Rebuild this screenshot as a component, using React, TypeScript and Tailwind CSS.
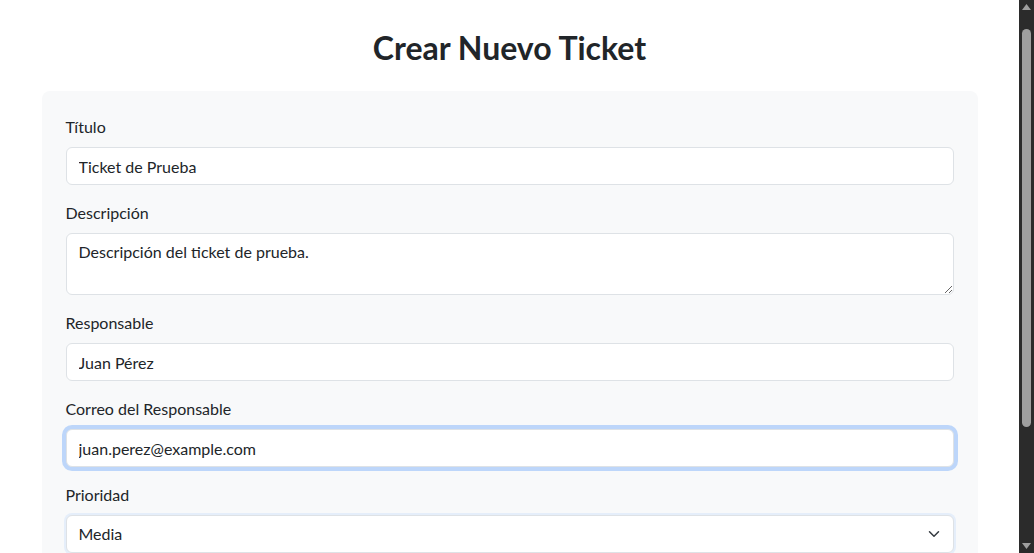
import { useState } from "react";

const inputClass =
  "block w-full rounded-[6px] border border-[#dee2e6] bg-white px-3 py-[6px] text-base leading-6 text-[#212529] outline-none";

function Label({ children, htmlFor }: { children: React.ReactNode; htmlFor: string }) {
  return (
    <label htmlFor={htmlFor} className="mb-2 block text-base leading-6 text-[#212529]">
      {children}
    </label>
  );
}

function Scrollbar() {
  return (
    <div className="flex w-[15px] shrink-0 flex-col items-center bg-[#2b2b2b]">
      <svg className="mt-[4px] h-[6px] w-[9px]" viewBox="0 0 9 6">
        <path d="M4.5 0 9 6H0z" fill="#9f9f9f" />
      </svg>
      <div className="mt-[19px] h-[398px] w-[9px] rounded-full bg-[#9f9f9f]" />
      <div className="flex-1" />
      <svg className="mb-[4px] h-[6px] w-[9px]" viewBox="0 0 9 6">
        <path d="M0 0h9L4.5 6z" fill="#9f9f9f" />
      </svg>
    </div>
  );
}

export default function App() {
  const [titulo, setTitulo] = useState("Ticket de Prueba");
  const [descripcion, setDescripcion] = useState("Descripción del ticket de prueba.");
  const [responsable, setResponsable] = useState("Juan Pérez");
  const [correo, setCorreo] = useState("juan.perez@example.com");
  const [prioridad, setPrioridad] = useState("Media");

  return (
    <div
      className="flex h-screen overflow-hidden bg-white text-[#212529]"
      style={{ fontFamily: 'Lato, "Noto Sans", sans-serif' }}
    >
      <main className="min-w-0 flex-1 overflow-hidden">
        <div className="mx-auto w-[960px] px-3 pt-[29px] pb-10">
          <h2 className="mb-6 text-center text-[32px] leading-[38px] font-bold text-[#212529]">
            Crear Nuevo Ticket
          </h2>

          <form className="rounded-lg bg-[#f8f9fa] p-6" onSubmit={(e) => e.preventDefault()}>
            <div className="mb-4">
              <Label htmlFor="titulo">Título</Label>
              <input
                id="titulo"
                type="text"
                value={titulo}
                onChange={(e) => setTitulo(e.target.value)}
                className={`${inputClass} h-[38px]`}
              />
            </div>

            <div className="mb-4">
              <Label htmlFor="descripcion">Descripción</Label>
              <textarea
                id="descripcion"
                rows={2}
                value={descripcion}
                onChange={(e) => setDescripcion(e.target.value)}
                className={`${inputClass} h-[62px] resize-y`}
              />
            </div>

            <div className="mb-4">
              <Label htmlFor="responsable">Responsable</Label>
              <input
                id="responsable"
                type="text"
                value={responsable}
                onChange={(e) => setResponsable(e.target.value)}
                className={`${inputClass} h-[38px]`}
              />
            </div>

            <div className="mb-4">
              <Label htmlFor="correo">Correo del Responsable</Label>
              <input
                id="correo"
                type="email"
                value={correo}
                onChange={(e) => setCorreo(e.target.value)}
                className={`${inputClass} h-[38px] border-[#86b7fe] shadow-[0_0_0_4px_rgba(13,110,253,0.25)]`}
              />
            </div>

            <div className="mb-4">
              <Label htmlFor="prioridad">Prioridad</Label>
              <div className="relative">
                <select
                  id="prioridad"
                  value={prioridad}
                  onChange={(e) => setPrioridad(e.target.value)}
                  className={`${inputClass} h-[38px] appearance-none border-[#a9cbfd] pr-9 shadow-[0_0_0_2px_rgba(13,110,253,0.08)]`}
                >
                  <option>Baja</option>
                  <option>Media</option>
                  <option>Alta</option>
                </select>
                <svg
                  className="pointer-events-none absolute top-1/2 right-3 h-3 w-4 -translate-y-1/2"
                  viewBox="0 0 16 16"
                  fill="none"
                  stroke="#343a40"
                  strokeWidth="2"
                  strokeLinecap="round"
                  strokeLinejoin="round"
                >
                  <path d="m2 5 6 6 6-6" />
                </svg>
              </div>
            </div>

            <button
              type="submit"
              className="rounded-[6px] bg-[#0d6efd] px-3 py-[6px] text-base text-white"
            >
              Crear Ticket
            </button>
          </form>
        </div>
      </main>
      <Scrollbar />
    </div>
  );
}
